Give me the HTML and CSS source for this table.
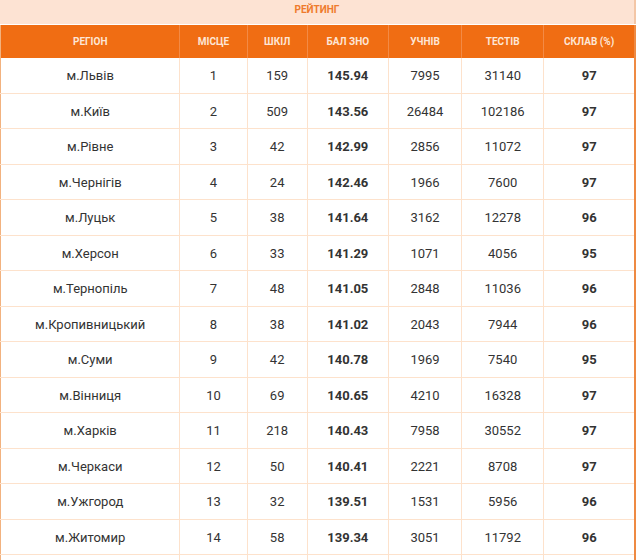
FILE: index.html
```html
<!DOCTYPE html>
<html lang="uk">
<head>
<meta charset="utf-8">
<title>Рейтинг</title>
<link rel="stylesheet" href="styles.css">
</head>
<body>
<div class="wrap">
  <div class="title">РЕЙТИНГ</div>
  <table class="rating">
    <colgroup>
      <col class="c-reg"><col class="c-place"><col class="c-sch"><col class="c-zno"><col class="c-stu"><col class="c-tst"><col class="c-pass">
    </colgroup>
    <thead>
      <tr><th>РЕГІОН</th><th>МІСЦЕ</th><th>ШКІЛ</th><th>БАЛ ЗНО</th><th>УЧНІВ</th><th>ТЕСТІВ</th><th>СКЛАВ (%)</th></tr>
    </thead>
    <tbody>
      <tr><td>м.Львів</td><td>1</td><td>159</td><td class="b">145.94</td><td>7995</td><td>31140</td><td class="b">97</td></tr>
      <tr><td>м.Київ</td><td>2</td><td>509</td><td class="b">143.56</td><td>26484</td><td>102186</td><td class="b">97</td></tr>
      <tr><td>м.Рівне</td><td>3</td><td>42</td><td class="b">142.99</td><td>2856</td><td>11072</td><td class="b">97</td></tr>
      <tr><td>м.Чернігів</td><td>4</td><td>24</td><td class="b">142.46</td><td>1966</td><td>7600</td><td class="b">97</td></tr>
      <tr><td>м.Луцьк</td><td>5</td><td>38</td><td class="b">141.64</td><td>3162</td><td>12278</td><td class="b">96</td></tr>
      <tr><td>м.Херсон</td><td>6</td><td>33</td><td class="b">141.29</td><td>1071</td><td>4056</td><td class="b">95</td></tr>
      <tr><td>м.Тернопіль</td><td>7</td><td>48</td><td class="b">141.05</td><td>2848</td><td>11036</td><td class="b">96</td></tr>
      <tr><td>м.Кропивницький</td><td>8</td><td>38</td><td class="b">141.02</td><td>2043</td><td>7944</td><td class="b">96</td></tr>
      <tr><td>м.Суми</td><td>9</td><td>42</td><td class="b">140.78</td><td>1969</td><td>7540</td><td class="b">95</td></tr>
      <tr><td>м.Вінниця</td><td>10</td><td>69</td><td class="b">140.65</td><td>4210</td><td>16328</td><td class="b">97</td></tr>
      <tr><td>м.Харків</td><td>11</td><td>218</td><td class="b">140.43</td><td>7958</td><td>30552</td><td class="b">97</td></tr>
      <tr><td>м.Черкаси</td><td>12</td><td>50</td><td class="b">140.41</td><td>2221</td><td>8708</td><td class="b">97</td></tr>
      <tr><td>м.Ужгород</td><td>13</td><td>32</td><td class="b">139.51</td><td>1531</td><td>5956</td><td class="b">96</td></tr>
      <tr><td>м.Житомир</td><td>14</td><td>58</td><td class="b">139.34</td><td>3051</td><td>11792</td><td class="b">96</td></tr>
      <tr class="tail"><td></td><td></td><td></td><td></td><td></td><td></td><td></td></tr>
    </tbody>
  </table>
</div>
</body>
</html>
```
FILE: styles.css
```css
html, body {
  margin: 0;
  padding: 0;
  background: #ffffff;
}
body {
  font-family: Roboto, "Liberation Sans", Arial, sans-serif;
  color: #333333;
}
.wrap {
  width: 636px;
}
.title {
  height: 24px;
  box-sizing: border-box;
  background: #fde3d3;
  border-right: 2px solid #f3c6a6;
  color: #ef7a2c;
  font-size: 10px;
  font-weight: 700;
  text-align: center;
  line-height: 20px;
  margin-bottom: 1px;
}
.rating {
  width: 636px;
  border-collapse: collapse;
  table-layout: fixed;
  border-left: 1px solid #f2b27f;
  border-right: 2px solid #ee8a43;
}
.c-reg { width: 179px; }
.c-place { width: 67px; }
.c-sch { width: 60px; }
.c-zno { width: 81px; }
.c-stu { width: 73px; }
.c-tst { width: 82px; }
.c-pass { width: 91px; }
.rating th {
  background: #f06d13;
  color: #fde6d6;
  font-size: 10px;
  font-weight: 700;
  height: 33px;
  padding: 0;
  text-align: center;
  border-left: 1px solid #f38a45;
}
.rating th:first-child {
  border-left: none;
}
.rating td {
  height: 35px;
  padding: 0;
  text-align: center;
  font-size: 13px;
  border: 1px solid #fde2cc;
  border-top: none;
}
.rating td:first-child {
  border-left: none;
}
.rating td:last-child {
  border-right: none;
}
.rating tr:nth-child(2n) td {
  height: 34px;
}
.rating td.b {
  font-weight: 700;
}
```
